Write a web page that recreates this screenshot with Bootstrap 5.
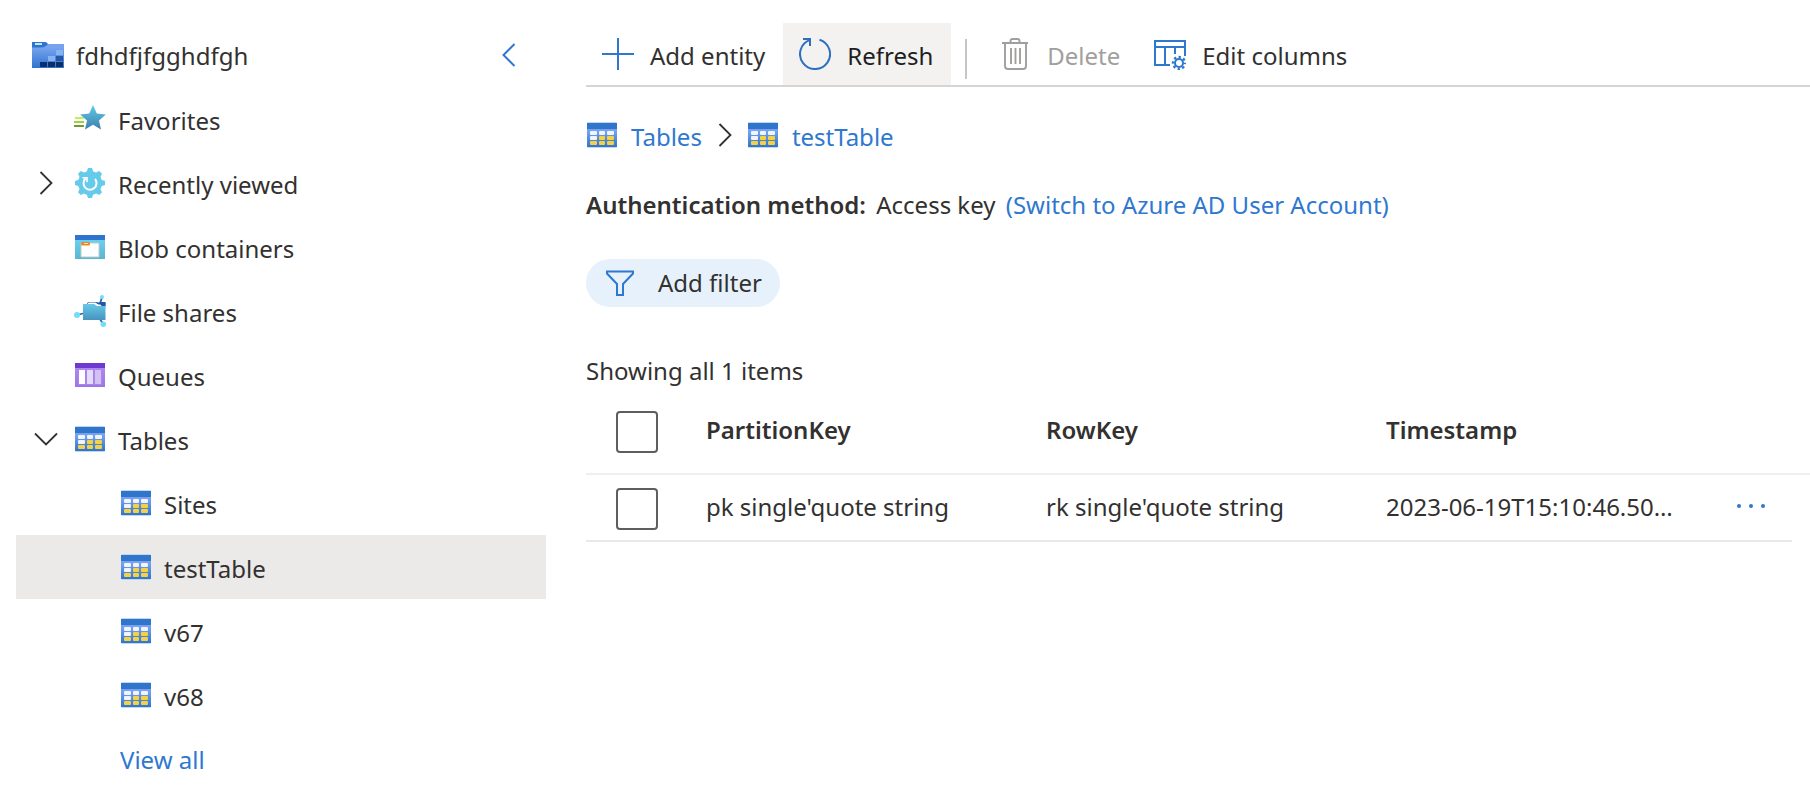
<!DOCTYPE html>
<html lang="en">
<head>
<meta charset="utf-8">
<meta name="viewport" content="width=device-width, initial-scale=1">
<title>testTable - Storage browser</title>
<link href="https://cdn.jsdelivr.net/npm/bootstrap@5.3.0/dist/css/bootstrap.min.css" rel="stylesheet">
<style>
  :root { --ink: #323130; --blue: #2f78d0; }
  body { font-family: "Segoe UI", "Noto Sans", sans-serif; font-size: 24px; line-height: 32px; color: var(--ink); background: #fff; }
  a { color: var(--blue); text-decoration: none; }
  a:hover { text-decoration: underline; }
  svg { display: block; flex: none; }
  strong, th { font-weight: 600; }

  .side-panel { flex: 0 0 586px; padding: 23px 40px 16px 16px; }
  .side-head, .tree-item { height: 64px; }
  .side-head { padding: 2px 30px 0 16px; }
  .side-head svg { margin-bottom: 2px; }
  .tree-item { width: 100%; padding: 4px 0 0 14px; color: var(--ink); }
  .tree-item:hover { text-decoration: none; }
  .tree-item > svg { margin-bottom: 4px; }
  .tree-item .label { margin-left: 12px; }
  .tree-item.nested { padding-left: 104px; }
  .tree-item.selected { background: #ebeae8; }
  .tree-toggle { width: 32px; margin: 0 12px 4px 0; color: var(--ink); }
  .tree-toggle svg { margin: 0 auto; }
  .tree-item.all-link { padding-top: 2px; color: var(--blue); }
  .collapse-btn { color: var(--blue); }

  .content { min-width: 0; padding-top: 23px; }
  .tools { height: 64px; border-bottom: 2px solid #d6d5d4; }
  .tool-btn { display: flex; align-items: center; gap: 16px; height: 62px; padding: 3px 18px 0 16px; border: 0; background: none; color: var(--ink); white-space: nowrap; }
  .tool-btn svg { margin-bottom: 3px; }
  .tool-btn.active-tool { background: #f3f2f1; color: #201f1e; }
  .tool-btn:disabled { color: #a19f9d; }
  .tool-rule { width: 2px; height: 40px; margin: 16px 16px 0 14px; background: #c8c6c4; }
  .crumbs { margin-top: 34px; padding-left: 1px; }
  .crumbs svg { margin-bottom: 4px; }
  .crumb { gap: 14px; }
  .auth { margin-top: 36px; }
  .filter-btn { display: flex; align-items: center; height: 48px; margin-top: 38px; padding: 0 18px 0 20px; gap: 24px; border: 0; border-radius: 24px; background: #e7f1fb; color: var(--ink); }
  .count { margin-top: 48px; }

  .entities { width: 100%; table-layout: fixed; border-collapse: collapse; }
  .entities th, .entities td { padding: 0; vertical-align: middle; overflow: hidden; text-overflow: ellipsis; white-space: nowrap; }
  .entities th { height: 87px; padding-bottom: 1px; border-bottom: 2px solid #f0efee; }
  .entities td { height: 67px; padding-bottom: 2px; border-bottom: 2px solid #eae9e8; }
  .entities td.gutter { border: 0; }
  .col-check { width: 120px; } .col-more { width: 66px; } .col-gutter { width: 18px; }
  .entities .form-check-input { display: block; width: 42px; height: 42px; margin: 5px 0 0 30px; border: 2px solid #605e5c; border-radius: 4px; background-color: #fff; }
  .more-btn { display: block; border: 0; background: none; padding: 10px; }
</style>
</head>
<body>
<svg width="0" height="0" class="position-absolute" aria-hidden="true">
  <defs>
    <linearGradient id="gTable" x2="0" y2="1"><stop stop-color="#77a3ee" offset=".15"/><stop stop-color="#2f74cf" offset="1"/></linearGradient>
    <linearGradient id="gCyan" x2="0" y2="1"><stop stop-color="#6fd6f5" offset="0"/><stop stop-color="#5bb4d3" offset="1"/></linearGradient>
    <linearGradient id="gStar" x2="0" y2="1"><stop stop-color="#60cbea" offset="0"/><stop stop-color="#3f7fab" offset="1"/></linearGradient>
    <linearGradient id="gPurple" x2="0" y2="1"><stop stop-color="#b38cf2" offset="0"/><stop stop-color="#9b75e6" offset="1"/></linearGradient>
    <linearGradient id="gShare" x2="0" y2="1"><stop stop-color="#68c8ea" offset="0"/><stop stop-color="#4694bd" offset="1"/></linearGradient>
    <symbol id="i-table" viewBox="0 0 30 26">
      <path d="M1 0h28l1 1v24l-1 1H1l-1-1V1z" fill="#b9d9ec"/>
      <path d="M0 6h30v19H0z" fill="url(#gTable)"/><path d="M0 1h30v6H0z" fill="#3174cc"/>
      <g fill="#f0f4fd"><rect x="3" y="9" width="7" height="4" rx="1"/><rect x="12" y="9" width="6" height="4" rx="1"/><rect x="20" y="9" width="7" height="4" rx="1"/><rect x="3" y="14" width="7" height="4" rx="1"/></g>
      <g fill="#f6d142"><rect x="12" y="14" width="6" height="4" rx="1"/><rect x="20" y="14" width="7" height="4" rx="1"/><rect x="3" y="19" width="7" height="4" rx="1"/><rect x="12" y="19" width="6" height="4" rx="1"/><rect x="20" y="19" width="7" height="4" rx="1"/></g>
    </symbol>
    <symbol id="i-right" viewBox="0 0 14 24"><path d="M1.500 1l11 11-11 11" fill="none" stroke="currentColor" stroke-width="1.800"/></symbol>
    <path id="tooth" d="M12.200 6.500L14 1h4l1.800 5.500z"/>
  </defs>
</svg>

<div class="d-flex min-vh-100">
  <nav class="side-panel" aria-label="Storage browser">
    <div class="side-head d-flex align-items-center">
      <svg width="32" height="26" viewBox="0 0 32 26">
        <path d="M0 2h32v24H0z" fill="url(#gTable)"/><path d="M0 0h13q2 0 3 2-1 1-3 2.500Q12 5.500 9 5.500H0z" fill="#2c75ce"/>
        <path d="M3 1h7v2H3z" fill="#c7e2fa"/>
        <path d="M24 8h7v5h-7zM16 14h7v5h-7z" fill="#88b3f2"/><path d="M24 14h7v5h-7z" fill="#2657a0"/>
        <path d="M8 20h7v5H8zM16 20h7v5h-7zM24 20h7v5h-7z" fill="#102e66"/>
      </svg>
      <span class="ms-2 ps-1 flex-grow-1">fdhdfjfgghdfgh</span>
      <button class="collapse-btn btn p-0 border-0" aria-label="Collapse menu"><svg width="14" height="24" viewBox="0 0 14 24"><path d="M12.500 1l-11 11 11 11" fill="none" stroke="currentColor" stroke-width="2"/></svg></button>
    </div>

    <a href="#" class="tree-item d-flex align-items-center"><span class="tree-toggle"></span>
      <svg width="32" height="32" viewBox="0 0 32 32"><path d="M1 15h9" stroke="#c3ef5c" stroke-width="2"/><path d="M0 19h10" stroke="#9bd53d" stroke-width="2"/><path d="M0 23h10" stroke="#719a2e" stroke-width="2"/><path d="M19 2l3.800 8.500 9 .9-6.800 6 2 9-8-4.600-8 4.600 2-9-6.800-6 9-.9z" fill="url(#gStar)"/></svg>
      <span class="label">Favorites</span></a>
    <a href="#" class="tree-item d-flex align-items-center"><span class="tree-toggle"><svg width="14" height="24"><use href="#i-right"/></svg></span>
      <svg width="32" height="32" viewBox="0 0 32 32"><g fill="#66caea"><circle cx="16" cy="16" r="12"/><use href="#tooth"/><use href="#tooth" transform="rotate(45 16 16)"/><use href="#tooth" transform="rotate(90 16 16)"/><use href="#tooth" transform="rotate(135 16 16)"/><use href="#tooth" transform="rotate(180 16 16)"/><use href="#tooth" transform="rotate(225 16 16)"/><use href="#tooth" transform="rotate(270 16 16)"/><use href="#tooth" transform="rotate(315 16 16)"/></g>
        <path d="M11.500 11.500a6.500 6.500 0 1 0 9.500.5" fill="none" stroke="#fff" stroke-width="2"/><path d="M8.500 10.800h4.500v4.500" fill="none" stroke="#fff" stroke-width="1.600"/></svg>
      <span class="label">Recently viewed</span></a>
    <a href="#" class="tree-item d-flex align-items-center"><span class="tree-toggle"></span>
      <svg width="32" height="26" viewBox="0 0 32 26"><path d="M1 1h30v24H1z" fill="url(#gCyan)"/><path d="M1 1h30v5H1z" fill="#2f74cf"/><path d="M7 9h18v14H7z" fill="#fff" stroke="#bdd0c2"/><rect x="7" y="8" width="9" height="3.500" rx="1.500" fill="#e9882b"/><path d="M10 9.500h4" stroke="#ffe3bd"/></svg>
      <span class="label">Blob containers</span></a>
    <a href="#" class="tree-item d-flex align-items-center"><span class="tree-toggle"></span>
      <svg width="32" height="32" viewBox="0 0 32 32"><path d="M3 20l8-2M26 9l2-7M26 24l3 5" stroke="#2c67ad" stroke-width="1.800"/><path d="M13 9l1-2h8l5 1h4.500v5H13z" fill="#2256a0"/><path d="M13.500 9.500l1-2h7l3 2.500" fill="#fff"/><path d="M21 8l3 1.500h7.500V13H20z" fill="#fff"/><path d="M25 7h6.500v4h-4z" fill="#2256a0"/><path d="M9 9h11l3 2h8.500v14H9z" fill="url(#gShare)"/><g fill="#72dcfb"><circle cx="3" cy="20" r="3"/><circle cx="28" cy="2" r="2"/><circle cx="29.300" cy="29.300" r="2.700"/></g></svg>
      <span class="label">File shares</span></a>
    <a href="#" class="tree-item d-flex align-items-center"><span class="tree-toggle"></span>
      <svg width="32" height="26" viewBox="0 0 32 26"><path d="M1 1h30v24H1z" fill="url(#gPurple)"/><path d="M1 1h30v5H1z" fill="#6e39d0"/><path d="M4 8h24v15H4z" fill="#a885ec"/><path d="M5 8h6v14H5z" fill="#fff"/><path d="M13 8h6v14h-6z" fill="#e6dcf9"/><path d="M21 8h6v14h-6z" fill="#d3c1f4"/></svg>
      <span class="label">Queues</span></a>
    <a href="#" class="tree-item d-flex align-items-center" aria-expanded="true"><span class="tree-toggle"><svg width="24" height="14" viewBox="0 0 24 14"><path d="M1 1.500l11 11 11-11" fill="none" stroke="currentColor" stroke-width="1.800"/></svg></span>
      <svg width="32" height="26"><use href="#i-table"/></svg>
      <span class="label">Tables</span></a>
    <a href="#" class="tree-item nested d-flex align-items-center"><svg width="32" height="26"><use href="#i-table"/></svg><span class="label">Sites</span></a>
    <a href="#" class="tree-item nested selected d-flex align-items-center" aria-current="page"><svg width="32" height="26"><use href="#i-table"/></svg><span class="label">testTable</span></a>
    <a href="#" class="tree-item nested d-flex align-items-center"><svg width="32" height="26"><use href="#i-table"/></svg><span class="label">v67</span></a>
    <a href="#" class="tree-item nested d-flex align-items-center"><svg width="32" height="26"><use href="#i-table"/></svg><span class="label">v68</span></a>
    <a href="#" class="tree-item nested all-link d-flex align-items-center">View all</a>
  </nav>

  <main class="content flex-grow-1">
    <div class="tools d-flex" role="toolbar" aria-label="Entity actions">
      <button class="tool-btn"><svg width="32" height="32" viewBox="0 0 32 32"><path d="M16 0v32M0 16h32" stroke="#2f78d0" stroke-width="2"/></svg>Add entity</button>
      <button class="tool-btn active-tool"><svg width="32" height="32" viewBox="0 0 32 32"><path d="M20.500 1.700a15 15 0 1 1-9.500.2M4 1h7v7" fill="none" stroke="#2e70c0" stroke-width="2"/></svg>Refresh</button>
      <div class="tool-rule"></div>
      <button class="tool-btn" disabled><svg width="32" height="32" viewBox="0 0 32 32"><path d="M3 5h26M11.500 5V3q0-2 2-2h5q2 0 2 2v2M6 5v23q0 3 3 3h15q3 0 3-3V5M12 10v16M16.500 10v16M21 10v16" fill="none" stroke="#a19f9d" stroke-width="1.900"/></svg>Delete</button>
      <button class="tool-btn"><svg width="32" height="32" viewBox="0 0 32 32"><path d="M16 27H1V3h30v15M1 9h30M11 9v18M21 9v7" fill="none" stroke="#2f78d0" stroke-width="2"/><circle cx="25" cy="25" r="4" fill="none" stroke="#2f78d0" stroke-width="2"/><circle cx="25" cy="25" r="6" fill="none" stroke="#2f78d0" stroke-width="2.400" stroke-dasharray="2.356" stroke-dashoffset="1.178"/></svg>Edit columns</button>
    </div>

    <nav class="crumbs d-flex align-items-center" aria-label="Breadcrumb">
      <a href="#" class="crumb d-flex align-items-center"><svg width="30" height="26"><use href="#i-table"/></svg>Tables</a>
      <svg class="mx-3" width="14" height="24"><use href="#i-right"/></svg>
      <a href="#" class="crumb d-flex align-items-center"><svg width="30" height="26"><use href="#i-table"/></svg>testTable</a>
    </nav>

    <div class="auth"><strong>Authentication method:</strong> <span class="mx-1">Access key</span> <a href="#">(Switch to Azure AD User Account)</a></div>

    <button class="filter-btn"><svg width="28" height="28" viewBox="0 0 28 28"><path d="M1 2.500h26v2L17 15v11h-6V15L1 4.500z" fill="none" stroke="#2f78d0" stroke-width="2"/></svg>Add filter</button>

    <div class="count">Showing all 1 items</div>

    <table class="entities">
      <colgroup><col class="col-check"><col><col><col><col class="col-more"><col class="col-gutter"></colgroup>
      <thead><tr><th><input class="form-check-input" type="checkbox" aria-label="Select all entities"></th><th>PartitionKey</th><th>RowKey</th><th>Timestamp</th><th></th><th></th></tr></thead>
      <tbody><tr><td><input class="form-check-input" type="checkbox" aria-label="Select entity"></td><td>pk single'quote string</td><td>rk single'quote string</td><td>2023-06-19T15:10:46.50…</td>
        <td><button class="more-btn" aria-label="More actions"><svg width="30" height="8" viewBox="0 0 30 8" fill="#2f78d0"><circle cx="3" cy="3" r="2"/><circle cx="15" cy="3" r="2"/><circle cx="27" cy="3" r="2"/></svg></button></td><td class="gutter"></td></tr></tbody>
    </table>
  </main>
</div>
<script src="https://cdn.jsdelivr.net/npm/bootstrap@5.3.0/dist/js/bootstrap.bundle.min.js"></script>
</body>
</html>
